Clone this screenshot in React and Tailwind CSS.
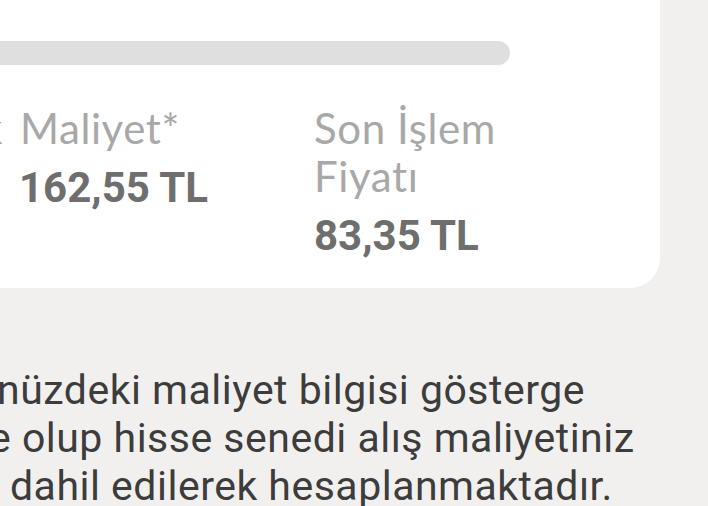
const labelFont = { fontFamily: 'Lato, "Open Sans", sans-serif' }
const numberFont = { fontFamily: 'Roboto, "Liberation Sans", sans-serif' }

function PriceColumn({ label, value, className = '' }) {
  return (
    <div className={className}>
      <div className="text-[42px] leading-[48px] tracking-[0.6px] text-[#a8a8a8]" style={labelFont}>
        {label}
      </div>
      <div className="mt-3 text-[42px] leading-[48px] font-bold text-[#6e6e6e] whitespace-nowrap" style={numberFont}>
        {value}
      </div>
    </div>
  )
}

function App() {
  return (
    <div className="w-[708px] h-[506px] overflow-hidden bg-[#f1f0ee]">
      {/* summary card, continues past the left edge */}
      <div className="-ml-10 w-[700px] bg-white rounded-br-[30px] pt-[41px] pb-[28px]">
        <div className="h-6 w-[550px] rounded-full bg-[#dfdfdf]" />

        <div className="mt-[39px] pl-[59px] flex">
          <PriceColumn
            className="w-[295px]"
            label={
              <p className="-ml-[38px] whitespace-nowrap">
                <span className="mr-[17px]">k</span>Maliyet*
              </p>
            }
            value="162,55 TL"
          />
          <PriceColumn
            className="w-[200px]"
            label={
              <>
                <p>Son İşlem</p>
                <p>Fiyatı</p>
              </>
            }
            value="83,35 TL"
          />
        </div>
      </div>

      {/* footnote */}
      <div className="mt-[78px] text-[41px] leading-[48px] tracking-[0.5px] text-[#3c3c3c] whitespace-nowrap" style={numberFont}>
        <p className="-ml-[3px]">nüzdeki maliyet bilgisi gösterge</p>
        <p className="-ml-[11px]">e olup hisse senedi alış maliyetiniz</p>
        <p className="ml-[10px]">dahil edilerek hesaplanmaktadır.</p>
      </div>
    </div>
  )
}

export default App
